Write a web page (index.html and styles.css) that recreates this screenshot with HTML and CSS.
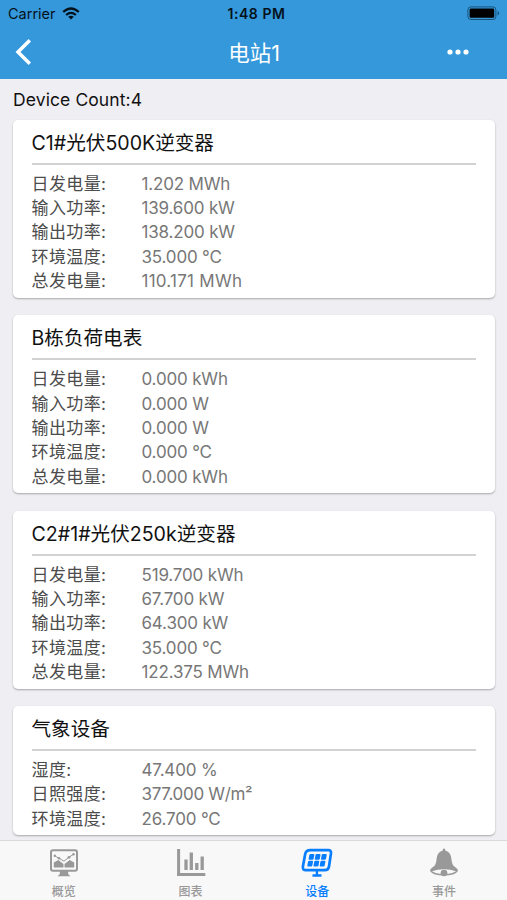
FILE: index.html
```html
<!DOCTYPE html>
<html lang="zh-CN">
<head>
<meta charset="utf-8">
<meta name="viewport" content="width=device-width, initial-scale=1">
<title>电站1</title>
<link rel="stylesheet" href="styles.css">
</head>
<body>
<header class="header">
  <div class="status">
    <div class="carrier"><span>Carrier</span>
      <svg width="18" height="13" viewBox="0 0 18 13"><g fill="none" stroke="#06121b" stroke-width="2.3"><path d="M1.2 5Q9-2 16.8 5"/><path d="M4.1 8Q9 3.8 13.9 8"/></g><path d="M6.2 9.8Q9 7.7 11.8 9.8L9 12.6Z" fill="#06121b"/></svg>
    </div>
    <span class="time">1:48 PM</span>
    <svg class="battery" width="33" height="15" viewBox="0 0 33 15"><rect x=".9" y=".9" width="28" height="12.6" rx="3" fill="none" stroke="#1b5378" stroke-width="1"/><rect x="2.6" y="2.6" width="24.6" height="9.2" rx="1.3" fill="#000"/><path d="M30.6 5v4.4q1.5-.7 1.5-2.2T30.6 5" fill="#1b5378"/></svg>
  </div>
  <div class="nav">
    <svg width="18" height="28" viewBox="0 0 18 28"><path d="M15.800 2.200L4 14 15.800 25.800" fill="none" stroke="#fff" stroke-width="3.5"/></svg>
    <h1>电站1</h1>
    <svg class="more" width="22" height="6" viewBox="0 0 22 6" fill="#fff"><circle cx="3" cy="3" r="2.6"/><circle cx="11" cy="3" r="2.6"/><circle cx="19" cy="3" r="2.6"/></svg>
  </div>
</header>
<main class="content">
  <p class="count">Device Count:4</p>
  <section class="card">
    <h2>C1#光伏500K逆变器</h2>
    <dl>
      <dt>日发电量:</dt><dd>1.202 MWh</dd>
      <dt>输入功率:</dt><dd>139.600 kW</dd>
      <dt>输出功率:</dt><dd>138.200 kW</dd>
      <dt>环境温度:</dt><dd>35.000 °C</dd>
      <dt>总发电量:</dt><dd class="loose">110.171 MWh</dd>
    </dl>
  </section>
  <section class="card">
    <h2>B栋负荷电表</h2>
    <dl>
      <dt>日发电量:</dt><dd>0.000 kWh</dd>
      <dt>输入功率:</dt><dd>0.000 W</dd>
      <dt>输出功率:</dt><dd>0.000 W</dd>
      <dt>环境温度:</dt><dd>0.000 °C</dd>
      <dt>总发电量:</dt><dd>0.000 kWh</dd>
    </dl>
  </section>
  <section class="card">
    <h2>C2#1#光伏250k逆变器</h2>
    <dl>
      <dt>日发电量:</dt><dd>519.700 kWh</dd>
      <dt>输入功率:</dt><dd>67.700 kW</dd>
      <dt>输出功率:</dt><dd>64.300 kW</dd>
      <dt>环境温度:</dt><dd>35.000 °C</dd>
      <dt>总发电量:</dt><dd>122.375 MWh</dd>
    </dl>
  </section>
  <section class="card">
    <h2>气象设备</h2>
    <dl>
      <dt>湿度:</dt><dd>47.400 %</dd>
      <dt>日照强度:</dt><dd class="tight">377.000 W/m²</dd>
      <dt>环境温度:</dt><dd>26.700 °C</dd>
    </dl>
  </section>
</main>
<nav class="tabs">
  <a class="tab">
    <svg width="32" height="32" viewBox="0 0 32 32"><rect x="3" y="3.2" width="26" height="20.6" rx="2" fill="none" stroke="currentColor" stroke-width="2"/><path d="M12.200 24h7.600l.7 3.500 2 1.700H9.500l2-1.700z" fill="currentColor"/><path d="M5.800 20.500v-5l4.500-2.500 5.200 4v3.500zM26.200 20.500v-5L21.700 13l-5.200 4v3.500z" fill="currentColor"/><path d="M6 8.500l5 2.700 5 3 5-4 5-3.200" fill="none" stroke="currentColor" stroke-width="1"/><g fill="currentColor"><circle cx="6.800" cy="8.800" r="1.200"/><circle cx="11" cy="11.200" r="1.300"/><circle cx="21" cy="10.300" r="1.400"/><circle cx="25.500" cy="7.300" r="1.200"/></g></svg>
    <span>概览</span>
  </a>
  <a class="tab">
    <svg width="32" height="32" viewBox="0 0 32 32" fill="none" stroke="currentColor"><path d="M3.600 2v26M2 27.600h28.300" stroke-width="3"/><path d="M11 12.500V23M16.300 5.500V23M21.800 16V23M27.200 9.500V23" stroke-width="3.300"/></svg>
    <span>图表</span>
  </a>
  <a class="tab active">
    <svg width="32" height="32" viewBox="0 0 32 32"><path d="M9.300 3.200h18q3 0 2.700 3l-2 13.300q-.6 3.700-4.300 3.700H5q-3.700 0-3.100-3.700L4.200 7q.8-3.800 5.100-3.800z" fill="none" stroke="currentColor" stroke-width="2.700"/><path d="M15.900 24v4M11.500 28.500h9" fill="none" stroke="currentColor" stroke-width="2.400"/><g fill="currentColor" transform="translate(2.700 0) skewX(-11)"><rect x="7.200" y="7.100" width="5" height="5.700" rx="1"/><rect x="13.400" y="7.100" width="5" height="5.700" rx="1"/><rect x="19.600" y="7.100" width="5" height="5.700" rx="1"/><rect x="7.200" y="13.800" width="5" height="5.700" rx="1"/><rect x="13.400" y="13.800" width="5" height="5.700" rx="1"/><rect x="19.600" y="13.800" width="5" height="5.700" rx="1"/></g></svg>
    <span>设备</span>
  </a>
  <a class="tab">
    <svg width="32" height="32" viewBox="0 0 32 32"><path d="M16 1.500q1.300 0 1.500 2.200 5.700 1.500 6 8.800.2 6 4.500 8.200Q30 22 30 24 27 28.600 16 28.600T2 24q0-2 2-3.300 4.300-2.200 4.500-8.200.3-7.300 6-8.800.2-2.200 1.500-2.200z" fill="currentColor"/><path d="M4 24.200Q9.500 22.200 16 22.200T28 24.200Q25 26.500 19.300 27A3.300 3.300 0 0 0 12.700 27Q7 26.500 4 24.200z" fill="#f8f8f8"/><circle cx="16" cy="26" r="3.300" fill="currentColor"/></svg>
    <span>事件</span>
  </a>
</nav>
</body>
</html>
```
FILE: styles.css
```css
* {
  box-sizing: border-box;
}

body {
  margin: 0;
  height: 900px;
  display: flex;
  flex-direction: column;
  overflow: hidden;
  background: #efeef3;
  font-family: Inter, "Noto Sans CJK SC", sans-serif;
}

svg {
  display: block;
  flex: none;
}

h1,
h2,
p,
dl,
dd {
  margin: 0;
  font-weight: 400;
}

.header {
  height: 79px;
  flex: none;
  background: #3498db;
}

.status {
  height: 27px;
  padding: 0 7px 0 8px;
  display: grid;
  grid-template-columns: 1fr auto 1fr;
  align-items: center;
  color: #06121b;
}

.carrier {
  display: flex;
  align-items: center;
  gap: 6px;
  font-size: 14.5px;
}

.time {
  padding-left: 5px;
  font-size: 14px;
  font-weight: 600;
  letter-spacing: 0.55px;
}

.battery {
  justify-self: end;
}

.nav {
  height: 50px;
  padding: 0 38px 0 14px;
  display: grid;
  grid-template-columns: 60px 1fr 37px;
  align-items: center;
  color: #fff;
}

.nav h1 {
  padding-left: 2px;
  margin-top: -1px;
  font-size: 21.5px;
  text-align: center;
}

.more {
  justify-self: end;
}

.content {
  flex: 1;
  min-height: 0;
  padding: 0 12px 0 13px;
}

.count {
  height: 40.7px;
  line-height: 42px;
  font-size: 17.5px;
  letter-spacing: 0.1px;
  color: #111;
}

.card {
  margin-bottom: 17.5px;
  padding: 0 19px 4px 18.5px;
  border-radius: 5px;
  background: #fff;
  box-shadow: 0 1px 2px rgba(0, 0, 0, 0.3);
}

.card h2 {
  height: 45px;
  line-height: 47px;
  border-bottom: 2px solid #d2d2d4;
  font-size: 19.6px;
  color: #111;
}

.card dl {
  padding-top: 7px;
  display: grid;
  grid-template-columns: 110px 1fr;
  grid-auto-rows: 24.4px;
  line-height: 25px;
  font-size: 17px;
}

.card dt {
  letter-spacing: 0.4px;
  color: #4c4c4c;
}

.card dd {
  letter-spacing: -0.17px;
  color: #777;
}

.card .loose {
  letter-spacing: 0.25px;
}

.card .tight {
  letter-spacing: -0.33px;
}

.tabs {
  height: 60px;
  flex: none;
  display: grid;
  grid-template-columns: repeat(4, 1fr);
  border-top: 1px solid #d9d9dc;
  background: #f8f8f8;
}

.tab {
  display: flex;
  flex-direction: column;
  align-items: center;
  padding: 6px 0 0 1px;
  color: #999;
  font-size: 12px;
  line-height: 18px;
  font-weight: 500;
}

.tab span {
  margin-top: 4px;
}

.active {
  color: #087eff;
}
```
